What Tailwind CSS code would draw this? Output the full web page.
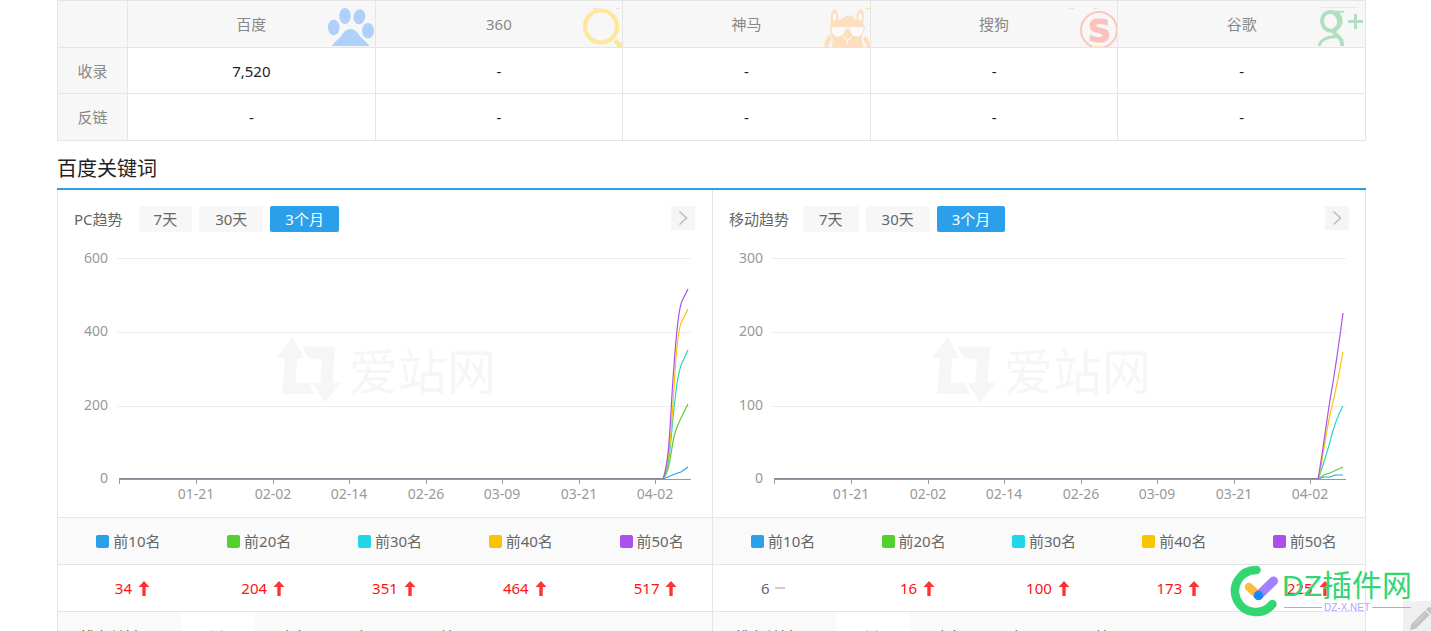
<!DOCTYPE html>
<html lang="zh-CN">
<head>
<meta charset="utf-8">
<title>百度关键词</title>
<meta name="viewport" content="width=device-width, initial-scale=1">
<script src="https://cdn.jsdelivr.net/npm/@tailwindcss/browser@4"></script>
</head>
<body class="bg-white">
<div class="relative h-screen overflow-hidden pl-[57px] pr-[65px] font-['Noto_Sans','Noto_Sans_CJK_SC',sans-serif] text-[15px] leading-5 text-[#666]">

  <table class="w-full table-fixed border-collapse text-center text-[#222]">
    <thead>
      <tr class="h-[47px] bg-[#f7f7f7] text-[#888]">
        <th class="w-[70px] border border-[#e5e5e5]"></th>
        <th class="relative border border-[#e5e5e5] font-normal">百度
          <svg class="absolute right-px bottom-px" width="47" height="38" viewBox="327 9 47 38" fill="#aed0fb" aria-hidden="true"><ellipse cx="333.700" cy="28.500" rx="5.800" ry="7.800"/><ellipse cx="345" cy="17" rx="5.700" ry="8"/><ellipse cx="359.300" cy="17.700" rx="5.900" ry="7.600" transform="rotate(10 359 18)"/><ellipse cx="368" cy="31.700" rx="6" ry="7.800"/><path d="M332 47C334 43 338 41 341 37C344 33 346 30 350.700 30C355 30 357 33 359.500 36.500C362 40 367 43 369.500 47Z"/></svg>
        </th>
        <th class="relative border border-[#e5e5e5] font-normal">360
          <svg class="absolute right-0 bottom-0" width="42" height="39" viewBox="580 8 42 39" fill="none" stroke="#fde79b" aria-hidden="true"><circle cx="601" cy="26.500" r="16" stroke-width="4.200"/><path d="M616.500 42L620 45.500" stroke-width="5" stroke-linecap="round"/><path d="M593 8.500h4M616 8.500h3" stroke="#f9d5d8"/></svg>
        </th>
        <th class="relative border border-[#e5e5e5] font-normal">神马
          <svg class="absolute right-0 bottom-0" width="46" height="39" viewBox="824 8 46 39" aria-hidden="true"><g fill="#fddfbf"><path d="M834 9.500C837 8 839 15 838 20L842 19C844 16 847 17 849 15L849.500 17.500L853 14.500L853 18L857 20C855 15 858 9 861 9C865 10 864 18 863 22L865 28L862 36C861 41 863 44 863 47H832C832 43 834 40 831 36L830 30L831 22C830 17 831 11 834 9.500Z"/><path d="M829 35L832 38L828 47H824.500C824 43 826 38 829 35ZM865 36C868 38 870 43 870 47H867L863 39Z"/><path d="M865 8h5v1h-5z" fill="#fbe3a8"/></g><path d="M834.500 12.500C836 13 836.500 17 835.500 20L833.500 21C832.500 18 833 14 834.500 12.500ZM860.500 12.500C862 14 862 18 861 21L859 20C858 17 859 14 860.500 12.500ZM831.500 27H845Q845.500 36.500 838 36.500Q831 36.500 831.500 27ZM850 27H863.500Q863.500 36.500 856.500 36.500Q850 36.500 850 27Z" fill="#fafafa"/><path d="M845 28.500h6M844 37.500L847.500 40.500L851 37.500M847.500 40.500V44" stroke="#fafafa" stroke-width="1.300" fill="none"/></svg>
        </th>
        <th class="relative border border-[#e5e5e5] font-normal">搜狗
          <svg class="absolute right-0 bottom-0" width="49" height="39" viewBox="1068 8 49 39" aria-hidden="true"><circle cx="1099" cy="30" r="18" fill="none" stroke="#fbc6bf" stroke-width="2"/><text x="1099.500" y="42" text-anchor="middle" font-family="DejaVu Sans" font-weight="700" font-size="32" fill="#fbc2ba" stroke="#fbc2ba" stroke-width="1">S</text><path d="M1069 8.500h5M1093 8.500h4" stroke="#d2ecd9"/><path d="M1113 43l4-3v7h-4z" fill="#f7f7f7"/><path d="M1092 46.500h9" stroke="#fae9bd"/></svg>
        </th>
        <th class="relative border border-[#e5e5e5] font-normal">谷歌
          <svg class="absolute right-px bottom-px" width="49" height="39" viewBox="1316 8 49 39" aria-hidden="true"><path d="M1322 8.500h37" stroke="#dfe9fb"/><g fill="none" stroke="#b2dfbf"><ellipse cx="1331.500" cy="22.500" rx="8.500" ry="9.500" stroke-width="4" transform="rotate(-12 1331 22)"/><path d="M1329 12.800h16" stroke-width="2"/><path d="M1338 14Q1342 18 1341.500 24Q1340 28 1335.500 31Q1334 34 1338 36.500Q1344 41 1343 47" stroke-width="4"/><path d="M1338 37.500Q1322 38 1320 47" stroke-width="3"/><path d="M1356.500 15v15M1349 22.500h15" stroke-width="3"/></g></svg>
        </th>
      </tr>
    </thead>
    <tbody>
      <tr class="h-[46px]">
        <th class="border border-[#e5e5e5] bg-[#f7f7f7] font-normal text-[#888]">收录</th>
        <td class="border border-[#e5e5e5]">7,520</td><td class="border border-[#e5e5e5]">-</td><td class="border border-[#e5e5e5]">-</td><td class="border border-[#e5e5e5]">-</td><td class="border border-[#e5e5e5]">-</td>
      </tr>
      <tr class="h-[47px]">
        <th class="border border-[#e5e5e5] bg-[#f7f7f7] font-normal text-[#888]">反链</th>
        <td class="border border-[#e5e5e5]">-</td><td class="border border-[#e5e5e5]">-</td><td class="border border-[#e5e5e5]">-</td><td class="border border-[#e5e5e5]">-</td><td class="border border-[#e5e5e5]">-</td>
      </tr>
    </tbody>
  </table>

  <h2 class="border-b-2 border-[#2b9fe9] pt-[14px] pb-[5px] text-xl leading-7 text-[#222]">百度关键词</h2>

  <div class="grid grid-cols-[655fr_652fr] border-x border-[#e5e5e5]">
    <!-- PC -->
    <section class="border-r border-[#e5e5e5]">
      <div class="flex items-start gap-[7px] pt-4 pr-[17px] pl-4">
        <h3 class="mr-[9px] leading-[26px]">PC趋势</h3>
        <button class="h-[26px] rounded-xs bg-[#f7f7f7] px-[15px]">7天</button>
        <button class="h-[26px] rounded-xs bg-[#f7f7f7] px-4">30天</button>
        <button class="h-[26px] rounded-xs bg-[#2b9fe9] px-[15px] text-white">3个月</button>
        <button class="ml-auto flex size-6 items-center justify-center bg-[#f5f5f5]" aria-label="更多"><svg width="10" height="16" viewBox="0 0 10 16" fill="none" stroke="#bbb" stroke-width="1.500"><path d="M1.500 1.500L8.500 8L1.500 14.500"/></svg></button>
      </div>
      <svg class="block w-full" viewBox="0 0 654 285" role="img" aria-label="PC趋势">
        <g fill="#f6f6f6"><path d="M234.700 105.300L218.700 125.700L227 126.700L224 162H257L251.300 150.700H237.700L239 126.700L246.300 125.700Z"/><path d="M244.300 114.700H277.300L274.300 150.700H282.700L267 170.700L254.700 151.300L262.300 150.700L264 126.700H251.300Z"/><text x="291" y="158" font-size="49">爱站网</text></g>
        <path d="M59 26.500H633M59 100.500H633M59 174.500H633" stroke="#eee"/>
        <path d="M61 247.500H633M61.500 247v5M138.500 247v5M215.500 247v5M291.500 247v5M368.500 247v5M444.500 247v5M521.500 247v5M597.500 247v5" stroke="#999"/>
        <path d="M61 246.500H605" stroke="#8a8290"/>
        <g font-size="14" fill="#999">
          <g text-anchor="end"><text x="50" y="31">600</text><text x="50" y="104">400</text><text x="50" y="178">200</text><text x="50" y="251">0</text></g>
          <g text-anchor="middle"><text x="138" y="267">01-21</text><text x="215" y="267">02-02</text><text x="291" y="267">02-14</text><text x="368" y="267">02-26</text><text x="444" y="267">03-09</text><text x="521" y="267">03-21</text><text x="597" y="267">04-02</text></g>
        </g>
        <g fill="none" stroke-width="1.200">
          <path stroke="#2b9fe9" d="M605 247C612 244 619 241 623 240L630 235"/>
          <path stroke="#54d12d" d="M605 247C613 238 613 213 617 201C619 193 624 184 630 172"/>
          <path stroke="#2ad6bd" d="M605 247C613 233 613 196 617 168C619 148 622 136 623.500 132L630 118"/>
          <path stroke="#fac400" d="M605 247C613 229 614 180 617 140C619 108 622 92 624 89L630 77"/>
          <path stroke="#a950ed" d="M605 247C612 228 612 185 615.500 140C619 90 622 73 624 69L630 57"/>
        </g>
      </svg>
      <table class="w-full table-fixed border-collapse text-center">
        <thead><tr class="h-[47px] border-y border-[#e5e5e5] bg-[#fafafa]">
          <th class="pl-[10px] font-normal"><span class="flex items-center justify-center gap-1"><i class="size-[13px] rounded-xs bg-[#2b9fe9]"></i>前10名</span></th>
          <th class="pl-[10px] font-normal"><span class="flex items-center justify-center gap-1"><i class="size-[13px] rounded-xs bg-[#54d12d]"></i>前20名</span></th>
          <th class="pl-[10px] font-normal"><span class="flex items-center justify-center gap-1"><i class="size-[13px] rounded-xs bg-[#20d6e7]"></i>前30名</span></th>
          <th class="pl-[10px] font-normal"><span class="flex items-center justify-center gap-1"><i class="size-[13px] rounded-xs bg-[#fac400]"></i>前40名</span></th>
          <th class="pl-[10px] font-normal"><span class="flex items-center justify-center gap-1"><i class="size-[13px] rounded-xs bg-[#a950ed]"></i>前50名</span></th>
        </tr></thead>
        <tbody><tr class="h-[47px] border-b border-[#e5e5e5] text-[#f11]">
          <td class="pl-[18px]"><span class="flex items-center justify-center gap-1.5">34<svg width="12" height="15" viewBox="0 0 12 15" fill="#f33"><path d="M6 0L11.500 6H7.700V15H4.300V6H.5Z"/></svg></span></td>
          <td class="pl-[18px]"><span class="flex items-center justify-center gap-1.5">204<svg width="12" height="15" viewBox="0 0 12 15" fill="#f33"><path d="M6 0L11.500 6H7.700V15H4.300V6H.5Z"/></svg></span></td>
          <td class="pl-[18px]"><span class="flex items-center justify-center gap-1.5">351<svg width="12" height="15" viewBox="0 0 12 15" fill="#f33"><path d="M6 0L11.500 6H7.700V15H4.300V6H.5Z"/></svg></span></td>
          <td class="pl-[18px]"><span class="flex items-center justify-center gap-1.5">464<svg width="12" height="15" viewBox="0 0 12 15" fill="#f33"><path d="M6 0L11.500 6H7.700V15H4.300V6H.5Z"/></svg></span></td>
          <td class="pl-[18px]"><span class="flex items-center justify-center gap-1.5">517<svg width="12" height="15" viewBox="0 0 12 15" fill="#f33"><path d="M6 0L11.500 6H7.700V15H4.300V6H.5Z"/></svg></span></td>
        </tr></tbody>
      </table>
      <div class="flex h-[50px] items-center bg-[#fafafa] text-[#222]">
        <span class="w-[123px] pl-[22px]">排名关键词</span>
        <button class="h-full w-[74px] bg-white text-[#2b9fe9]">涨幅</button>
        <button class="h-full w-[74px]">跌出</button>
        <button class="h-full w-[74px]">跌入</button>
        <button class="h-full px-[22px]">网站页</button>
      </div>
    </section>

    <!-- 移动 -->
    <section>
      <div class="flex items-start gap-[7px] pt-4 pr-4 pl-4">
        <h3 class="mr-[7px] leading-[26px]">移动趋势</h3>
        <button class="h-[26px] rounded-xs bg-[#f7f7f7] px-4">7天</button>
        <button class="h-[26px] rounded-xs bg-[#f7f7f7] px-4">30天</button>
        <button class="h-[26px] rounded-xs bg-[#2b9fe9] px-[15px] text-white">3个月</button>
        <button class="ml-auto flex size-6 items-center justify-center bg-[#f5f5f5]" aria-label="更多"><svg width="10" height="16" viewBox="0 0 10 16" fill="none" stroke="#bbb" stroke-width="1.500"><path d="M1.500 1.500L8.500 8L1.500 14.500"/></svg></button>
      </div>
      <svg class="block w-full" viewBox="0 0 652 285" role="img" aria-label="移动趋势">
        <g fill="#f6f6f6"><path d="M234.700 105.300L218.700 125.700L227 126.700L224 162H257L251.300 150.700H237.700L239 126.700L246.300 125.700Z"/><path d="M244.300 114.700H277.300L274.300 150.700H282.700L267 170.700L254.700 151.300L262.300 150.700L264 126.700H251.300Z"/><text x="291" y="158" font-size="49">爱站网</text></g>
        <path d="M59 26.500H633M59 100.500H633M59 174.500H633" stroke="#eee"/>
        <path d="M61 247.500H633M61.500 247v5M138.500 247v5M215.500 247v5M291.500 247v5M368.500 247v5M444.500 247v5M521.500 247v5M597.500 247v5" stroke="#999"/>
        <path d="M61 246.500H605" stroke="#8a8290"/>
        <g font-size="14" fill="#999">
          <g text-anchor="end"><text x="50" y="31">300</text><text x="50" y="104">200</text><text x="50" y="178">100</text><text x="50" y="251">0</text></g>
          <g text-anchor="middle"><text x="138" y="267">01-21</text><text x="215" y="267">02-02</text><text x="291" y="267">02-14</text><text x="368" y="267">02-26</text><text x="444" y="267">03-09</text><text x="521" y="267">03-21</text><text x="597" y="267">04-02</text></g>
        </g>
        <g fill="none" stroke-width="1.200">
          <path stroke="#2b9fe9" d="M605 247L611 245H617L622 243H630"/>
          <path stroke="#54d12d" d="M605 247L611 243L617 241L630 235"/>
          <path stroke="#2ad6bd" d="M605 247C609 238 613 223 617 210C620 197 624 185 630 174"/>
          <path stroke="#fac400" d="M605 247C609 236 612 203 618 178C622 163 626 142 630 120"/>
          <path stroke="#a950ed" d="M605 247C608 232 612 200 617 168C621 145 626 112 630 81"/>
        </g>
      </svg>
      <table class="w-full table-fixed border-collapse text-center">
        <thead><tr class="h-[47px] border-y border-[#e5e5e5] bg-[#fafafa]">
          <th class="pl-[10px] font-normal"><span class="flex items-center justify-center gap-1"><i class="size-[13px] rounded-xs bg-[#2b9fe9]"></i>前10名</span></th>
          <th class="pl-[10px] font-normal"><span class="flex items-center justify-center gap-1"><i class="size-[13px] rounded-xs bg-[#54d12d]"></i>前20名</span></th>
          <th class="pl-[10px] font-normal"><span class="flex items-center justify-center gap-1"><i class="size-[13px] rounded-xs bg-[#20d6e7]"></i>前30名</span></th>
          <th class="pl-[10px] font-normal"><span class="flex items-center justify-center gap-1"><i class="size-[13px] rounded-xs bg-[#fac400]"></i>前40名</span></th>
          <th class="pl-[10px] font-normal"><span class="flex items-center justify-center gap-1"><i class="size-[13px] rounded-xs bg-[#a950ed]"></i>前50名</span></th>
        </tr></thead>
        <tbody><tr class="h-[47px] border-b border-[#e5e5e5] text-[#f11]">
          <td class="pr-[10px] text-[#666]"><span class="flex items-center justify-center gap-1.5">6<svg width="10" height="2" viewBox="0 0 10 2" fill="#ccc"><path d="M0 0h10v2H0z"/></svg></span></td>
          <td class="pl-[18px]"><span class="flex items-center justify-center gap-1.5">16<svg width="12" height="15" viewBox="0 0 12 15" fill="#f33"><path d="M6 0L11.500 6H7.700V15H4.300V6H.5Z"/></svg></span></td>
          <td class="pl-[18px]"><span class="flex items-center justify-center gap-1.5">100<svg width="12" height="15" viewBox="0 0 12 15" fill="#f33"><path d="M6 0L11.500 6H7.700V15H4.300V6H.5Z"/></svg></span></td>
          <td class="pl-[18px]"><span class="flex items-center justify-center gap-1.5">173<svg width="12" height="15" viewBox="0 0 12 15" fill="#f33"><path d="M6 0L11.500 6H7.700V15H4.300V6H.5Z"/></svg></span></td>
          <td class="pl-[18px]"><span class="flex items-center justify-center gap-1.5">225<svg width="12" height="15" viewBox="0 0 12 15" fill="#f33"><path d="M6 0L11.500 6H7.700V15H4.300V6H.5Z"/></svg></span></td>
        </tr></tbody>
      </table>
      <div class="flex h-[50px] items-center bg-[#fafafa] text-[#222]">
        <span class="w-[123px] pl-[22px]">排名关键词</span>
        <button class="h-full w-[74px] bg-white text-[#2b9fe9]">涨幅</button>
        <button class="h-full w-[74px]">跌出</button>
        <button class="h-full w-[74px]">跌入</button>
        <button class="h-full px-[22px]">网站页</button>
      </div>
    </section>
  </div>

  <!-- Floating edit button -->
  <button class="absolute right-0 bottom-0 h-[30px] w-7 bg-[#f0f0f0]" aria-label="反馈"><svg class="block" width="28" height="30" viewBox="0 0 28 30" fill="#c3c3c3"><path d="M7 29L8.500 23L22 9.500L26.500 14L13 27.500Z"/><path d="M23 8.500L25 6.500Q26.500 5.500 28 7V12.500L27.500 13Z"/><path d="M11 24L23 12" stroke="#dedede"/></svg></button>

  <!-- DZ stamp -->
  <svg class="pointer-events-none absolute right-[15px] bottom-[11px]" width="186" height="60" viewBox="1230 560 186 60" fill="none" role="img" aria-label="DZ插件网">
    <g stroke-linecap="round">
      <path d="M1256.500 570A21 21 0 1 0 1272.500 604" stroke="#33d670" stroke-width="8.500"/>
      <path d="M1249 587L1258 595.500" stroke="#ffb93e" stroke-width="8.500"/>
      <path d="M1273.500 581L1258.500 595.500" stroke="#a481ff" stroke-width="9"/>
    </g>
    <circle cx="1258.500" cy="595.500" r="4.700" fill="#1787ff"/>
    <text x="1282" y="596" font-size="30" fill="#33d670" font-family="Liberation Sans, Noto Sans CJK SC, sans-serif">DZ插件网</text>
    <text x="1324" y="611" font-size="10" fill="#b7a0ff" font-family="Liberation Sans, sans-serif">DZ-X.NET</text>
    <path d="M1284 607.500h38M1372 607.500h39" stroke="#b7a0ff"/>
  </svg>
</div>
</body>
</html>
